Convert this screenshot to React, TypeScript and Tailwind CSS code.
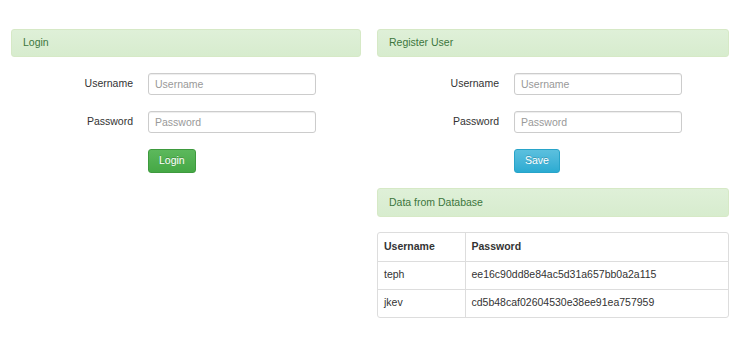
import React from "react";

const users = [
  { username: "teph", password: "ee16c90dd8e84ac5d31a657bb0a2a115" },
  { username: "jkev", password: "cd5b48caf02604530e38ee91ea757959" },
];

function PanelHeading({ title, tall }: { title: string; tall?: boolean }) {
  return (
    <div
      className={`flex items-center rounded-[3px] border border-[#d6e9c6] bg-gradient-to-b from-[#dff0d8] to-[#d7ecce] px-[11px] text-[10.5px] text-[#3c763d] ${
        tall ? "h-[29px]" : "h-[28px]"
      }`}
    >
      {title}
    </div>
  );
}

function Field({ label }: { label: string }) {
  return (
    <div className="flex items-center">
      <label className="w-[122px] text-right text-[10.5px] text-[#333]">{label}</label>
      <input
        placeholder={label}
        className="ml-[15px] h-[22px] w-[168px] rounded-[3px] border border-[#ccc] bg-white px-[6px] text-[10.5px] text-[#555] shadow-[inset_0_1px_1px_rgba(0,0,0,0.075)] outline-none placeholder:text-[#999]"
      />
    </div>
  );
}

function Form({ button, kind }: { button: string; kind: "success" | "info" }) {
  const btn =
    kind === "success"
      ? "from-[#5cb85c] to-[#45a845] border-[#3e9a3e]"
      : "from-[#5bc0de] to-[#2aabd2] border-[#28a4c9]";
  return (
    <div className="mt-[16px] flex flex-col gap-[16px]">
      <Field label="Username" />
      <Field label="Password" />
      <div className="flex pl-[137px]">
        <button
          className={`h-[24px] rounded-[3px] border bg-gradient-to-b px-[10px] text-[10.5px] text-white [text-shadow:0_-1px_0_rgba(0,0,0,0.2)] ${btn}`}
        >
          {button}
        </button>
      </div>
    </div>
  );
}

export default function App() {
  return (
    <div className="flex h-[358px] gap-[16px] bg-white pl-[11px] pt-[29px] font-['Liberation_Sans',Arial,sans-serif]">
      <div className="w-[350px]">
        <PanelHeading title="Login" />
        <Form button="Login" kind="success" />
      </div>
      <div className="w-[352px]">
        <PanelHeading title="Register User" />
        <Form button="Save" kind="info" />
        <div className="mt-[15px]">
          <PanelHeading title="Data from Database" tall />
        </div>
        <div className="mt-[15px] overflow-hidden rounded-[3px] border border-[#ddd]">
          <table className="w-full border-collapse text-[10.5px] text-[#333]">
            <thead>
              <tr className="h-[28px]">
                <th className="w-[87px] border-r border-[#ddd] px-[6px] text-left font-bold">Username</th>
                <th className="px-[6px] text-left font-bold">Password</th>
              </tr>
            </thead>
            <tbody>
              {users.map((u) => (
                <tr key={u.username} className="h-[28px] border-t border-[#ddd]">
                  <td className="border-r border-[#ddd] px-[6px]">{u.username}</td>
                  <td className="px-[6px]">{u.password}</td>
                </tr>
              ))}
            </tbody>
          </table>
        </div>
      </div>
    </div>
  );
}
